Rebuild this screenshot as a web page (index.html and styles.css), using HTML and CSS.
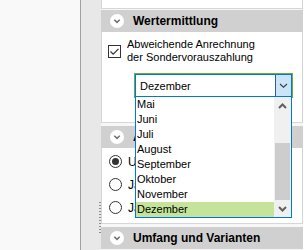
FILE: index.html
```html
<!DOCTYPE html>
<html lang="de">
<head>
    <meta charset="UTF-8">
    <title>Wertermittlung</title>
    <link rel="stylesheet" href="styles.css">
</head>
<body>
    <div class="screen">
        <div class="sidebar"></div>
        <div class="splitter"><div class="grip"></div></div>
        <div class="panel">
            <div class="prev-body"></div>

            <div class="group-head">
                <svg class="toggle" width="14" height="14" viewBox="0 0 14 14"><circle cx="7" cy="7" r="7" fill="#fff"/><path d="M4.3 5.8 L7 8.4 L9.7 5.8" fill="none" stroke="#707070" stroke-width="1.5"/></svg>
                Wertermittlung
            </div>
            <div class="group-body value-body">
                <div class="check-row">
                    <span class="checkbox"><svg width="11" height="11" viewBox="0 0 11 11"><path d="M1.5 5.5 L4.2 8.2 L9.5 2.8" fill="none" stroke="#333" stroke-width="1.2"/></svg></span>
                    <span class="check-label">Abweichende Anrechnung<br>der Sondervorauszahlung</span>
                </div>
                <div class="combo">
                    <div class="combo-inner">
                        <span class="combo-text">Dezember</span>
                        <span class="combo-btn"><svg width="15" height="21" viewBox="0 0 15 21"><path d="M4 9 L7.5 12.2 L11 9" fill="none" stroke="#3c3c3c" stroke-width="1.1"/></svg></span>
                    </div>
                    <div class="dropdown">
                        <ul class="items">
                            <li>Mai</li>
                            <li>Juni</li>
                            <li>Juli</li>
                            <li>August</li>
                            <li>September</li>
                            <li>Oktober</li>
                            <li>November</li>
                            <li class="selected">Dezember</li>
                        </ul>
                        <div class="scrollbar">
                            <div class="sb-btn"><svg width="9" height="6" viewBox="0 0 9 6"><path d="M1 5 L4.5 1.5 L8 5" fill="none" stroke="#606060" stroke-width="2"/></svg></div>
                            <div class="sb-track"><div class="sb-thumb"></div></div>
                            <div class="sb-btn"><svg width="9" height="6" viewBox="0 0 9 6"><path d="M1 1 L4.5 4.5 L8 1" fill="none" stroke="#606060" stroke-width="2"/></svg></div>
                        </div>
                    </div>
                </div>
            </div>

            <div class="group-head">
                <svg class="toggle" width="14" height="14" viewBox="0 0 14 14"><circle cx="7" cy="7" r="7" fill="#fff"/><path d="M4.3 5.8 L7 8.4 L9.7 5.8" fill="none" stroke="#707070" stroke-width="1.5"/></svg>
                Anrechnung
            </div>
            <div class="group-body radio-body">
                <div class="radio-row"><span class="radio checked"></span>Unverändert</div>
                <div class="radio-row"><span class="radio"></span>Jahresbetrag</div>
                <div class="radio-row"><span class="radio"></span>Jahresanteil</div>
            </div>

            <div class="group-head">
                <svg class="toggle" width="14" height="14" viewBox="0 0 14 14"><circle cx="7" cy="7" r="7" fill="#fff"/><path d="M4.3 5.8 L7 8.4 L9.7 5.8" fill="none" stroke="#707070" stroke-width="1.5"/></svg>
                Umfang und Varianten
            </div>
        </div>
        <div class="edge"></div>
    </div>
</body>
</html>
```

FILE: styles.css
```css
body {
    margin: 0;
    font-family: "Liberation Sans", Arial, sans-serif;
    font-size: 11px;
    color: #000;
}

.screen {
    display: flex;
    height: 250px;
    overflow: hidden;
}

.sidebar {
    width: 80px;
    background: #f9f9f9;
    border-right: 1px solid #a0a0a0;
}

.splitter {
    width: 20px;
    background: #e8e8e8;
    display: flex;
    flex-direction: column;
    align-items: flex-end;
}

.grip {
    width: 2px;
    height: 33px;
    margin-top: 202px;
    background: repeating-linear-gradient(to bottom, #8c8c8c 0 1px, transparent 1px 3px);
}

.panel {
    width: 202px;
    display: flex;
    flex-direction: column;
    background: #f7f7f7;
}

.edge {
    flex: 1;
    background: #fff;
}

.prev-body {
    height: 8px;
    background: #fff;
    border: 1px solid #d6d6d6;
    border-top: none;
    margin-bottom: 1px;
}

.group-head {
    height: 22px;
    flex-shrink: 0;
    display: flex;
    align-items: center;
    padding-left: 9px;
    background: #d0d0d0;
    font-size: 12px;
    font-weight: bold;
}

.toggle {
    margin-right: 9px;
}

.group-body {
    flex-shrink: 0;
    background: #fff;
    border: 1px solid #d6d6d6;
    border-top: none;
    margin-bottom: 3px;
}

.value-body {
    height: 90px;
}

.check-row {
    display: flex;
    align-items: flex-start;
    padding: 6px 0 0 6px;
    gap: 6px;
    line-height: 13px;
}

.checkbox {
    width: 11px;
    height: 11px;
    margin-top: 7px;
    border: 1px solid #333;
    background: #fff;
    display: flex;
}

.combo {
    position: relative;
    width: 157px;
    height: 23px;
    margin: 9px 0 0 32px;
    border: 1px solid #77a93a;
}

.combo-inner {
    height: 21px;
    display: flex;
    align-items: center;
    border: 1px solid #0078d7;
    background: #fff;
}

.combo-text {
    flex: 1;
    padding-left: 4px;
}

.combo-btn {
    width: 15px;
    height: 21px;
    display: flex;
    background: #cce4f7;
    border-left: 1px solid #2a5f94;
}

.dropdown {
    position: absolute;
    left: 0;
    top: 23px;
    width: 155px;
    height: 120px;
    z-index: 10;
    display: flex;
    background: #fff;
    border: 1px solid #0078d7;
    border-top: none;
}

.items {
    flex: 1;
    list-style: none;
    margin: 0;
    padding: 0;
}

.items li {
    height: 15px;
    line-height: 15px;
    padding-left: 1px;
}

.items li.selected {
    background: #c5e49a;
}

.scrollbar {
    width: 17px;
    display: flex;
    flex-direction: column;
    background: #f0f0f0;
}

.sb-btn {
    height: 17px;
    display: flex;
    align-items: center;
    justify-content: center;
}

.sb-track {
    flex: 1;
    display: flex;
    flex-direction: column;
    justify-content: flex-end;
}

.sb-thumb {
    height: 57px;
    margin: 0 1px;
    background: #cdcdcd;
}

.radio-body {
    height: 76px;
    padding: 7px 0 0 7px;
    box-sizing: border-box;
    display: flex;
    flex-direction: column;
    gap: 10px;
}

.radio-row {
    display: flex;
    align-items: center;
    gap: 6px;
    height: 13px;
    font-size: 12px;
}

.radio {
    width: 11px;
    height: 11px;
    border: 1px solid #333;
    border-radius: 50%;
    background: #fff;
    display: flex;
    align-items: center;
    justify-content: center;
}

.radio.checked::after {
    content: "";
    width: 7px;
    height: 7px;
    border-radius: 50%;
    background: #333;
}
```
